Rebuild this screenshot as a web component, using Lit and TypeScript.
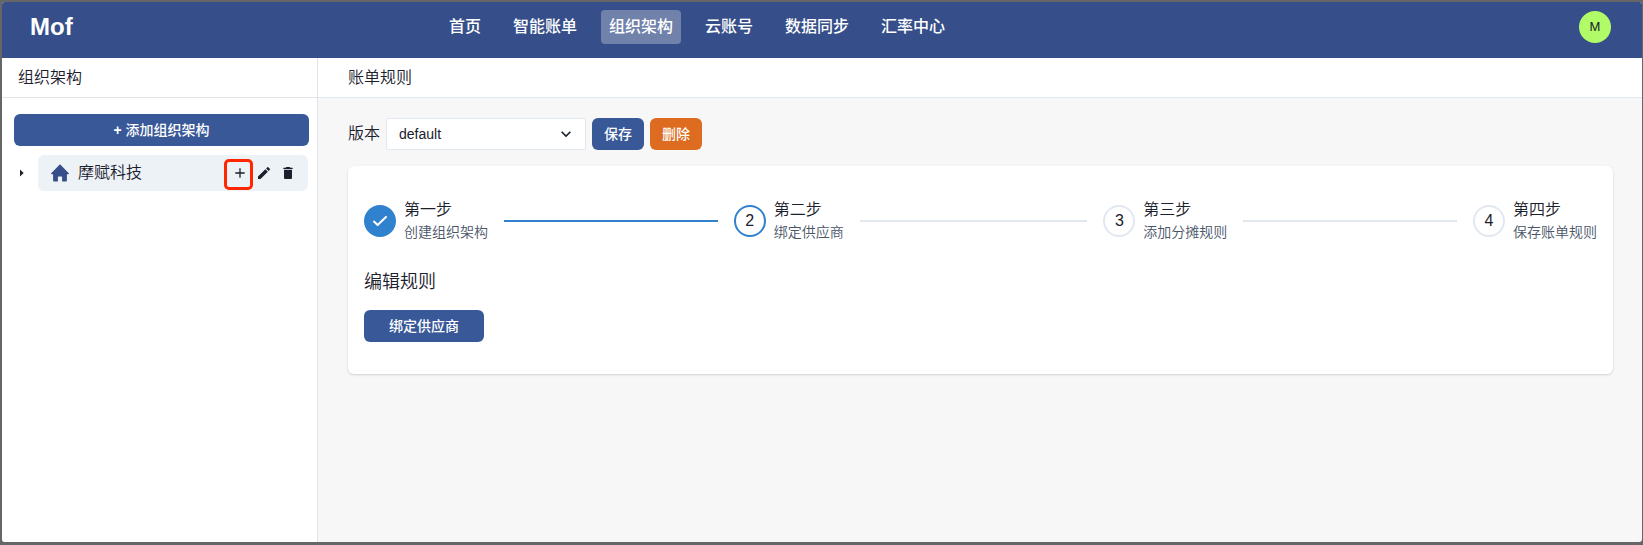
import { LitElement, html, css, svg } from "lit";
import { customElement, property } from "lit/decorators.js";
import { classMap } from "lit/directives/class-map.js";

type StepState = "done" | "active" | "todo";
interface Step { title: string; desc: string; state: StepState }

const STEPS: Step[] = [
  { title: "第一步", desc: "创建组织架构", state: "done" },
  { title: "第二步", desc: "绑定供应商", state: "active" },
  { title: "第三步", desc: "添加分摊规则", state: "todo" },
  { title: "第四步", desc: "保存账单规则", state: "todo" },
];

const NAV = ["首页", "智能账单", "组织架构", "云账号", "数据同步", "汇率中心"];

const icon = (size: number, body: unknown) =>
  html`<svg width=${size} height=${size} viewBox="0 0 24 24" fill="currentColor">${body}</svg>`;

const home = svg`<path d="M11.3 1.1c.4-.4 1-.4 1.4 0L23.7 12.2c.5.5.2 1.4-.5 1.4h-2v8.6c0 .6-.4 1-1 1h-5.4v-5.6c0-.5-.3-.8-.8-.8h-4c-.5 0-.8.3-.8.8v5.6H3.8c-.6 0-1-.4-1-1v-8.6h-2c-.7 0-1-.9-.5-1.4z"/>`;
const plus = svg`<path d="M10.7 2.6h2.6v8.1h8.1v2.6h-8.1v8.1h-2.6v-8.1H2.6v-2.6h8.1z"/>`;
const pencil = svg`<path d="M3 17.25V21h3.75L17.81 9.94l-3.75-3.75L3 17.25zM20.71 7.04a1 1 0 0 0 0-1.41l-2.34-2.34a1 1 0 0 0-1.41 0l-1.83 1.83 3.75 3.75 1.83-1.83z"/>`;
const trash = svg`<path d="M6 19c0 1.1.9 2 2 2h8c1.1 0 2-.9 2-2V7H6v12zM19 4h-3.5l-1-1h-5l-1 1H5v2h14V4z"/>`;
const chevron = svg`<path d="M16.59 8.59 12 13.17 7.41 8.59 6 10l6 6 6-6z"/>`;

@customElement("rule-stepper")
export class RuleStepper extends LitElement {
  @property({ attribute: false }) steps: Step[] = [];

  static styles = css`
    :host { display: flex; gap: 16px; }
    .step { display: flex; align-items: center; flex: 1 1 0; min-width: 0; }
    .step:last-child { flex: none; }
    .dot { box-sizing: border-box; flex: none; width: 32px; height: 32px; border-radius: 50%;
      border: 2px solid #e2e8f0; display: flex; align-items: center; justify-content: center;
      font-size: 16px; line-height: 1; margin-right: 8px; }
    .active .dot { border-color: #3182ce; }
    .done .dot { border-color: #3182ce; background: #3182ce; color: #fff; }
    .title { font-size: 16px; line-height: 24px; }
    .desc { font-size: 14px; line-height: 21px; color: #4a5568; white-space: nowrap; }
    .line { flex: 1; height: 2px; margin-left: 16px; background: #e2e8f0; }
    .done .line { background: #3182ce; }
    svg { display: block; }
  `;

  render() {
    return this.steps.map((s, i) => html`
      <div class=${classMap({ step: true, [s.state]: true })}>
        <div class="dot">${s.state === "done"
          ? html`<svg width="16" height="16" viewBox="0 0 16 16" fill="none" stroke="currentColor" stroke-width="2" stroke-linecap="round" stroke-linejoin="round"><path d="M2 8.6 5.6 12 14 4"/></svg>`
          : i + 1}</div>
        <div><div class="title">${s.title}</div><div class="desc">${s.desc}</div></div>
        ${i < this.steps.length - 1 ? html`<div class="line"></div>` : ""}
      </div>`);
  }
}

@customElement("app-root")
export class AppRoot extends LitElement {
  static styles = css`
    *, *::after { box-sizing: border-box; }
    :host { display: block; height: 545px; background: #666; padding: 2px 1px 3px 2px; box-sizing: border-box;
      font: 350 16px/24px "Liberation Sans", "Noto Sans CJK SC", sans-serif; color: #1a202c; }
    svg { display: block; }
    .frame { height: 100%; display: flex; flex-direction: column; border-radius: 3px; overflow: hidden; background: #f7f7f7; }
    header { flex: none; height: 56px; background: #364f8a; color: #fff; display: grid;
      grid-template-columns: 410px auto 1fr; padding: 0 31px 0 29px; }
    .brand { font-size: 24px; line-height: 32px; font-weight: 700; padding-top: 9px; margin-left: -1px; }
    nav { display: flex; gap: 16px; padding-top: 8px; align-items: flex-start; }
    nav a { height: 34px; padding: 0 8px; border-radius: 4px; line-height: 33px; font-weight: 500; }
    nav a.on { background: #7081aa; }
    .avatar { justify-self: end; margin-top: 9px; width: 32px; height: 32px; border-radius: 50%; background: #b0fb67;
      color: #1a202c; font-size: 13px; line-height: 32px; text-align: center; }
    .body { flex: 1; min-height: 0; display: flex; }
    aside { flex: none; width: 316px; background: #fff; border-right: 1px solid #e2e2ec; }
    .bar { height: 40px; border-bottom: 1px solid #e2e8f0; background: #fff; line-height: 39px; }
    aside .bar { padding-left: 16px; border-bottom-color: #e2e2e8; }
    .tree { padding: 16px 8px 0 12px; }
    button { border: 0; border-radius: 6px; height: 32px; padding: 0 12px; background: #385898; color: #fff;
      font: 500 14px/32px "Liberation Sans", "Noto Sans CJK SC", sans-serif; display: block; }
    .add { width: 295px; }
    .add b { font-weight: 700; }
    .danger { background: #dd6b20; }
    .row { display: flex; align-items: center; margin-top: 9px; }
    .caret { width: 24px; padding-left: 6.3px; }
    .node { width: 270px; height: 36px; border-radius: 6px; background: #edf2f7; display: flex; align-items: center; padding: 0 8px 0 13px; }
    .home { color: #364f8a; margin-right: 9px; }
    .name { flex: 1; line-height: 34px; }
    .acts { display: flex; align-items: center; }
    .act { width: 24px; height: 36px; display: flex; align-items: center; justify-content: center; }
    .act.marked { position: relative; }
    .act.marked::after { content: ""; position: absolute; left: -4px; top: 3.5px; width: 28.5px; height: 31.5px;
      border: 3px solid #ff2600; border-radius: 5px; }
    main { flex: 1; min-width: 0; }
    main .bar { padding-left: 30px; }
    .content { padding: 20px 29px 0 30px; }
    .tools { display: flex; gap: 6px; align-items: center; }
    .tools .label { line-height: 31px; height: 32px; }
    .select { width: 200px; height: 32px; border: 1px solid #e2e8f0; border-radius: 2px; background: #fff;
      display: flex; align-items: center; justify-content: space-between; padding: 0 9px 0 12px; font-size: 14px; }
    .card { margin-top: 16px; height: 208px; padding: 32px 16px 0; border-radius: 6px; background: #fff;
      box-shadow: 0 1px 3px rgba(0,0,0,.1), 0 1px 2px rgba(0,0,0,.06); }
    .heading { font-size: 18px; line-height: 27px; margin-top: 26px; }
    .bind { width: 120px; margin-top: 14px; }
  `;

  render() {
    return html`
      <div class="frame">
        <header>
          <div class="brand">Mof</div>
          <nav>${NAV.map((n) => html`<a class=${classMap({ on: n === "组织架构" })}>${n}</a>`)}</nav>
          <div class="avatar">M</div>
        </header>
        <div class="body">
          <aside>
            <div class="bar">组织架构</div>
            <div class="tree">
              <button class="add"><b>+</b> 添加组织架构</button>
              <div class="row">
                <div class="caret"><svg width="4" height="8" viewBox="0 0 4 8"><path d="M0 .5 3.7 4 0 7.5z" fill="#1a202c"/></svg></div>
                <div class="node">
                  <span class="home">${icon(18, home)}</span>
                  <span class="name">摩赋科技</span>
                  <span class="acts">
                    <span class="act marked">${icon(12, plus)}</span>
                    <span class="act">${icon(16, pencil)}</span>
                    <span class="act">${icon(16, trash)}</span>
                  </span>
                </div>
              </div>
            </div>
          </aside>
          <main>
            <div class="bar">账单规则</div>
            <div class="content">
              <div class="tools">
                <span class="label">版本</span>
                <div class="select"><span>default</span>${icon(20, chevron)}</div>
                <button>保存</button>
                <button class="danger">删除</button>
              </div>
              <section class="card">
                <rule-stepper .steps=${STEPS}></rule-stepper>
                <div class="heading">编辑规则</div>
                <button class="bind">绑定供应商</button>
              </section>
            </div>
          </main>
        </div>
      </div>`;
  }
}
